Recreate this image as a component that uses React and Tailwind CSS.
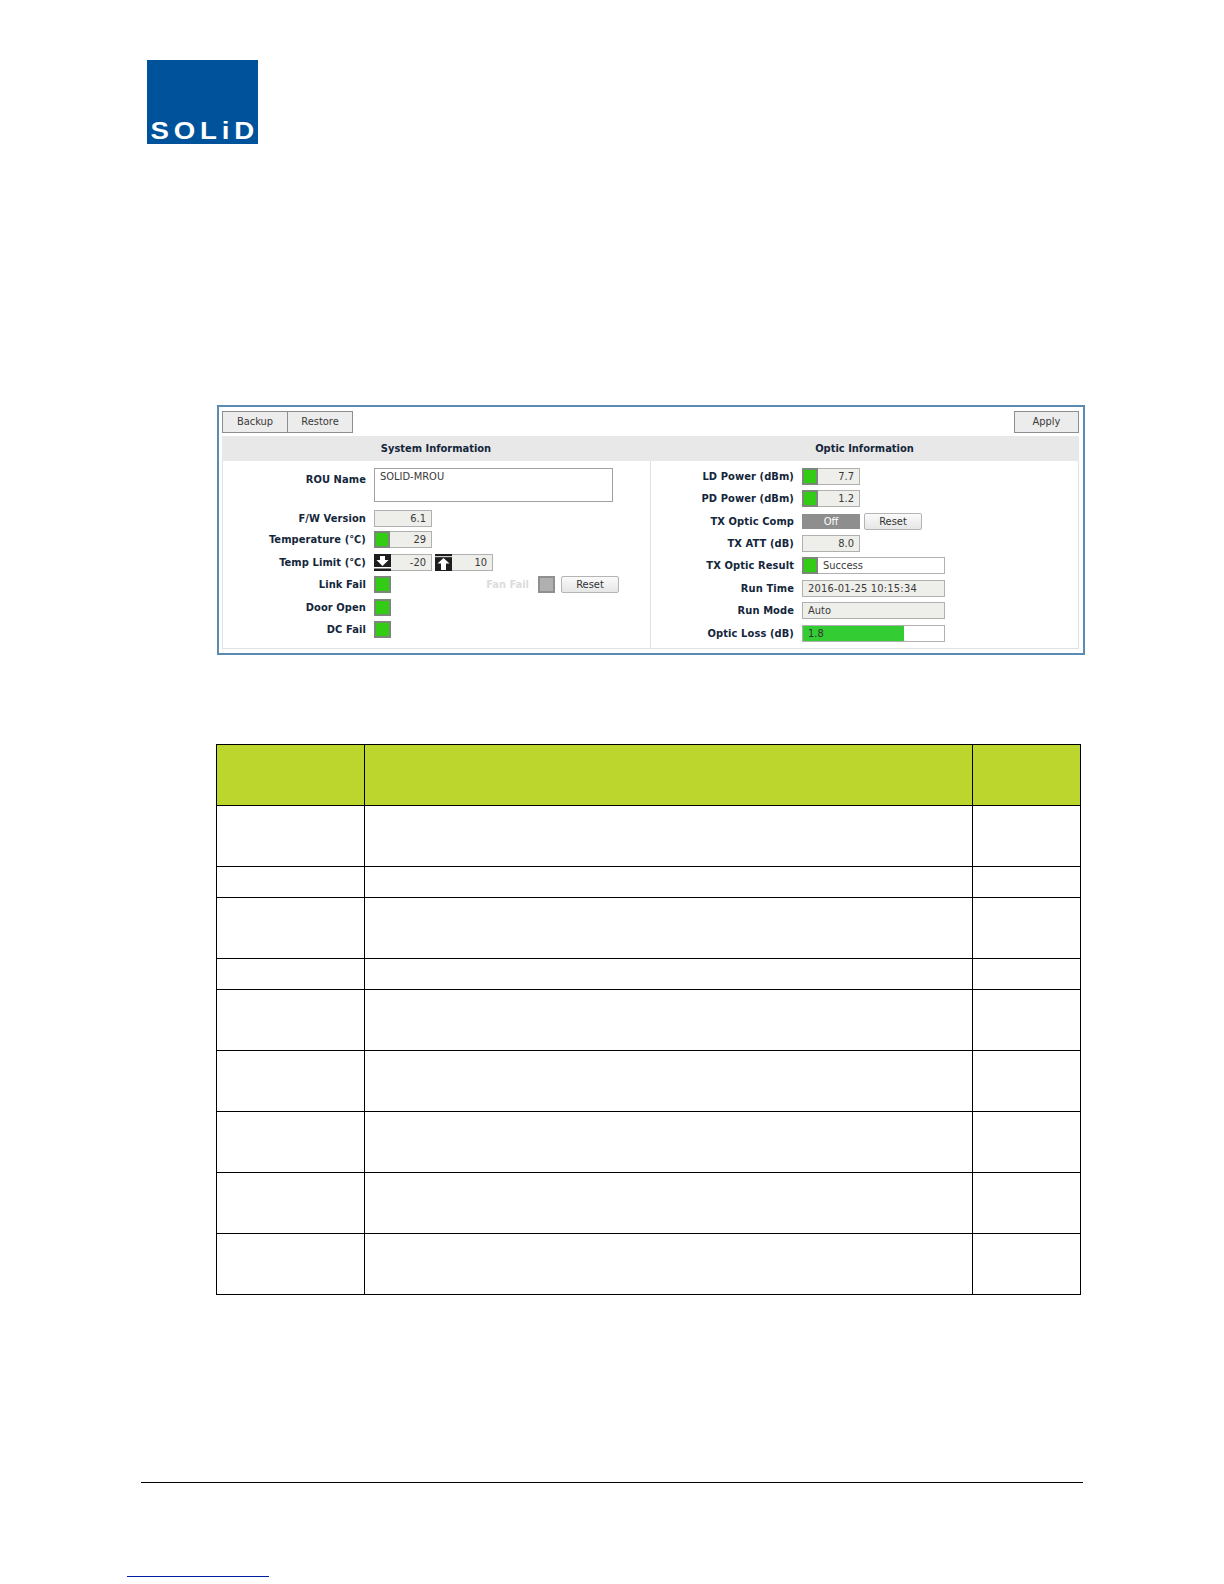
const font = { fontFamily: '"DejaVu Sans Condensed", "DejaVu Sans", sans-serif' };

function Label({ children }) {
  return (
    <span className="w-[141px] shrink-0 pt-[1px] pr-[8px] text-right text-[11px] font-bold tracking-[0.1px] whitespace-nowrap text-[#14263b]">
      {children}
    </span>
  );
}

function Led({ gray }) {
  return (
    <span
      className={`block h-[17px] w-[17px] shrink-0 border-2 ${gray ? "border-[#8f8f8f] bg-[#b0b0b0]" : "border-[#7b8778] bg-[#33cc14]"}`}
    />
  );
}

function Field({ value, led, w = "w-[58px]", icon, white, left, wide }) {
  return (
    <span className={`flex h-[17px] ${w} shrink-0 items-center border border-[#b0b0b0] text-[11px] text-[#3a3a3a] ${white ? "bg-white" : "bg-[#eeeeea]"} ${wide ? "tracking-[0.2px]" : ""}`}>
      {led && <span className="-my-px -ml-px block h-[17px] w-[16px] shrink-0 border-2 border-[#7b8778] bg-[#33cc14]" />}
      {icon}
      <span className={`grow pt-[1px] whitespace-nowrap ${left ? "pl-[5px] text-left" : "pr-[5px] text-right"}`}>{value}</span>
    </span>
  );
}

function DownIcon() {
  return (
    <svg viewBox="0 0 17 17" className="-my-px -ml-px block h-[17px] w-[17px] shrink-0">
      <rect width="17" height="17" fill="#1e1e1e" />
      <path d="M6 2h5v4h3.500L8.500 12 2.500 6H6z" fill="#fff" />
      <rect x="0" y="13" width="17" height="1.500" fill="#fff" />
    </svg>
  );
}

function UpIcon() {
  return (
    <svg viewBox="0 0 17 17" className="-my-px -ml-px block h-[17px] w-[17px] shrink-0">
      <rect width="17" height="17" fill="#1e1e1e" />
      <rect x="0" y="2" width="17" height="1.200" fill="#cfcfcf" />
      <path d="M8.500 4l6 5.500H11V16H6V9.500H2.500z" fill="#fff" />
    </svg>
  );
}

function Btn({ children, className = "" }) {
  return (
    <button className={`flex items-center justify-center border border-[#8e8e8e] bg-[#ececec] text-[11px] text-[#3a3a3a] ${className}`}>
      {children}
    </button>
  );
}

function SmallReset() {
  return (
    <button className="flex h-[17px] w-[58px] items-center justify-center rounded-[2px] border border-[#b4b4b4] bg-gradient-to-b from-[#fafafa] to-[#e6e6e6] pt-[1px] text-[11px] text-[#333]">
      Reset
    </button>
  );
}

function Row({ label, children, mb = "mb-[5px]" }) {
  return (
    <div className={`flex h-[17px] ${mb} items-center`}>
      <Label>{label}</Label>
      {children}
    </div>
  );
}

const rows = [61, 61, 31, 61, 31, 61, 61, 61, 61, 61];

export default function App() {
  return (
    <div className="h-[1584px] w-[1224px] overflow-hidden bg-white" style={font}>
      <div className="mt-[60px] ml-[147px] flex h-[84px] w-[111px] items-end bg-[#00539b]">
        <span
          className="block origin-left scale-x-[1.15] pl-[3px] text-[24px] leading-[27px] font-bold tracking-[4.200px] whitespace-nowrap text-white"
          style={{ fontFamily: '"Liberation Sans", sans-serif' }}
        >
          SOLiD
        </span>
      </div>

      <div className="mt-[261px] ml-[217px] w-[868px] border-2 border-[#5a8bb2] bg-white pt-[4px] pr-[4px] pb-[4px] pl-[3px]">
        <div className="mb-[3px] flex h-[22px] items-stretch justify-between">
          <div className="flex">
            <Btn className="w-[66px]">Backup</Btn>
            <Btn className="-ml-px w-[66px]">Restore</Btn>
          </div>
          <Btn className="w-[65px]">Apply</Btn>
        </div>
        <div className="flex h-[25px] bg-[#e8e8e8] pt-[1px] text-[11px] font-bold text-[#14263b]">
          <div className="flex w-[428px] items-center justify-center">System Information</div>
          <div className="flex grow items-center justify-center">Optic Information</div>
        </div>
        <div className="flex h-[188px] border border-t-0 border-[#e2e2e2]">
          <div className="w-[428px] border-r border-[#e2e2e2] pt-[7px] pl-[10px]">
            <div className="mb-[8px] flex h-[34px] items-start">
              <span className="mt-[3px] flex"><Label>ROU Name</Label></span>
              <div className="h-[34px] w-[239px] border border-[#a0a0a0] bg-white pt-[1px] pl-[5px] text-[11px] leading-[14px] text-[#3a3a3a]">SOLID-MROU</div>
            </div>
            <Row label="F/W Version" mb="mb-[4px]"><Field value="6.1" /></Row>
            <Row label="Temperature (℃)" mb="mb-[6px]"><Field value="29" led /></Row>
            <Row label="Temp Limit (℃)">
              <Field value="-20" icon={<DownIcon />} />
              <span className="ml-[3px]"><Field value="10" icon={<UpIcon />} /></span>
            </Row>
            <Row label="Link Fail" mb="mb-[6px]">
              <Led />
              <span className="ml-[83px] flex items-center whitespace-nowrap">
                <span className="w-[55px] pt-[1px] text-right text-[11px] font-bold text-[#dcdcdc]">Fan Fail</span>
                <span className="ml-[9px]"><Led gray /></span>
                <span className="ml-[6px]"><SmallReset /></span>
              </span>
            </Row>
            <Row label="Door Open"><Led /></Row>
            <Row label="DC Fail" mb="mb-0"><Led /></Row>
          </div>
          <div className="grow pt-[7px] pl-[10px]">
            <Row label="LD Power (dBm)"><Field value="7.7" led /></Row>
            <Row label="PD Power (dBm)" mb="mb-[6px]"><Field value="1.2" led /></Row>
            <Row label="TX Optic Comp">
              <span className="flex h-[15px] w-[58px] items-center justify-center bg-[#8e8e8e] pt-[1px] text-[11px] text-white">Off</span>
              <span className="ml-[4px]"><SmallReset /></span>
            </Row>
            <Row label="TX ATT (dB)"><Field value="8.0" /></Row>
            <Row label="TX Optic Result" mb="mb-[6px]"><Field value="Success" led w="w-[143px]" white left /></Row>
            <Row label="Run Time"><Field value="2016-01-25 10:15:34" w="w-[143px]" left wide /></Row>
            <Row label="Run Mode" mb="mb-[6px]"><Field value="Auto" w="w-[143px]" left /></Row>
            <Row label="Optic Loss (dB)" mb="mb-0">
              <span className="relative flex h-[17px] w-[143px] items-center border border-[#b0b0b0] bg-white text-[11px] text-[#333]">
                <span className="absolute inset-y-0 left-0 w-[101px] bg-[#33cc33]" />
                <span className="relative pt-[1px] pl-[5px]">1.8</span>
              </span>
            </Row>
          </div>
        </div>
      </div>

      <table className="mt-[89px] ml-[216px] w-[864px] table-fixed border-collapse">
        <colgroup>
          <col className="w-[148px]" />
          <col className="w-[608px]" />
          <col className="w-[108px]" />
        </colgroup>
        <tbody>
          {rows.map((h, i) => (
            <tr key={i} style={{ height: h }}>
              {[0, 1, 2].map((c) => (
                <td key={c} className={`border border-black p-0 ${i === 0 ? "bg-[#bdd62e]" : "bg-white"}`} />
              ))}
            </tr>
          ))}
        </tbody>
      </table>

      <div className="mt-[187px] ml-[141px] h-px w-[942px] bg-black" />
      <div className="mt-[93px] ml-[127px] h-px w-[142px] bg-[#00209f]" />
    </div>
  );
}
